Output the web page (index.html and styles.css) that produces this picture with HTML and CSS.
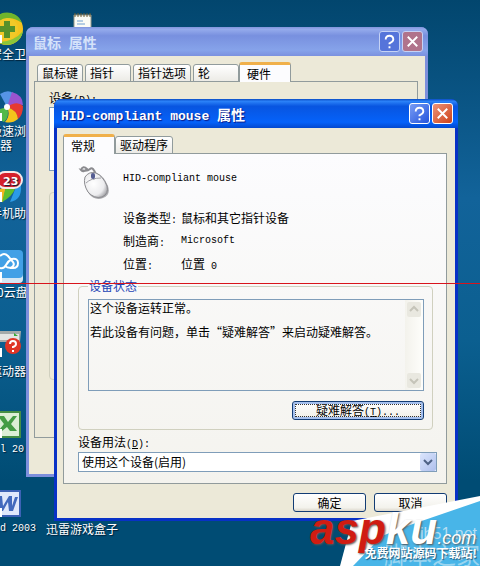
FILE: index.html
```
<!DOCTYPE html>
<html lang="zh-CN">
<head>
  <meta charset="UTF-8">
  <meta name="viewport" content="width=device-width, initial-scale=1.0">
  <title>HID-compliant mouse 属性</title>
  <link rel="stylesheet" href="styles.css">
</head>
<body>
  <div class="desktop">

    <!-- 桌面图标 -->
    <div class="shortcut safe">
      <svg width="24" height="34" viewBox="0 0 24 34">
        <circle cx="7" cy="17" r="16" fill="#f6c21d"/>
        <path d="M-9 17A16 16 0 0 1 22 11Q10 2 -2 10Z" fill="#6fb52c"/>
        <path d="M23 19A16 16 0 0 1-2 30Q14 30 23 19Z" fill="#8bc63a"/>
        <circle cx="7" cy="17" r="11" fill="#f2c928"/>
        <path d="M4 9h6v5h5v6h-5v6H4v-6h-5v-6h5z" fill="#57912a"/>
        <path d="M0 23h2v8h-2z" fill="#fff"/>
      </svg>
      <span>安全卫</span>
    </div>
    <div class="shortcut browser">
      <svg width="24" height="32" viewBox="0 0 24 32">
        <path d="M7 16L0 3Q8-2 13 2Q16 7 7 16Z" fill="#5594e6"/>
        <path d="M7 16L12 1Q23 4 23 14Q16 13 7 16Z" fill="#9a54cf"/>
        <path d="M7 16Q17 9 23 15Q23 24 18 28Q16 19 7 16Z" fill="#e73a32"/>
        <path d="M7 16Q17 19 18 28Q12 33 5 31Q11 24 7 16Z" fill="#f4c51b"/>
        <path d="M7 16Q10 26 4 31L0 29V18Z" fill="#54b948"/>
        <circle cx="7" cy="16" r="3" fill="#fff"/>
        <path d="M0 22h2v8h-2z" fill="#fff"/>
      </svg>
      <span>极速浏</span>
      <span class="second-line">器</span>
    </div>
    <div class="shortcut phone">
      <svg width="24" height="34" viewBox="0 0 24 34">
        <path d="M0 18L6 15L3 31H0Z" fill="#f2b51d"/>
        <path d="M6 15L16 16Q12 26 2 31Z" fill="#5fbf2d"/>
        <path d="M16 16L21 15Q22 29 10 31Z" fill="#2b9be8"/>
        <rect x="-3" y="1" width="25" height="16" rx="8" fill="#d5202c" stroke="#f6e9e9" stroke-width="2"/>
        <text x="3" y="14" class="badge-text">23</text>
        <path d="M0 21h2v10h-2z" fill="#fff"/>
      </svg>
      <span>手机助</span>
    </div>
    <div class="shortcut cloud">
      <svg width="24" height="34" viewBox="0 0 24 34">
        <rect x="-9" y="3" width="32" height="30" rx="4" fill="#d5e7f4"/>
        <rect x="-9" y="0" width="32" height="28" rx="4" fill="#42a0e6"/>
        <path d="M0 6Q4 2 8 6L13 12Q15 15 12 17T5 16M0 18Q4 19 6 15T12 9Q18 8 18 13T13 18H10" fill="none" stroke="#fff" stroke-width="2"/>
        <path d="M0 22h2v10h-2z" fill="#fff"/>
      </svg>
      <span>0云盘</span>
    </div>
    <div class="shortcut driver">
      <svg width="24" height="34" viewBox="0 0 24 34">
        <path d="M0 2H21L20 13H0Z" fill="#a4aaa9"/>
        <path d="M0 5H19V11H0Z" fill="#e3e5e3"/>
        <path d="M14 4l4 3h-4z" fill="#36a834"/>
        <circle cx="13" cy="17" r="8" fill="#df3526"/>
        <path d="M10 15Q10 12 13 12T16 15Q16 17 13 18V19M13 21V23" fill="none" stroke="#fff" stroke-width="2"/>
        <path d="M0 19h2v9h-2z" fill="#fff"/>
      </svg>
      <span>驱动器</span>
    </div>
    <div class="shortcut excel">
      <svg width="24" height="32" viewBox="0 0 24 32">
        <rect x="-4" y="3" width="24" height="25" fill="#dbeed6" stroke="#448e45" stroke-width="2"/>
        <path d="M-2 7H4L8 13L13 7H17L11 15L17 22H10L7 18L2 22H-2L4 15Z" fill="#449c45"/>
        <path d="M0 20h2v9h-2z" fill="#fff"/>
      </svg>
      <span class="latin">l 20</span>
    </div>
    <div class="shortcut word">
      <svg width="24" height="32" viewBox="0 0 24 32">
        <rect x="-4" y="3" width="24" height="25" fill="#e0e8fb" stroke="#3d62b5" stroke-width="2"/>
        <path d="M-2 8H2L3 18L9 8H12L12 18L15 9H18L13 23H9L8 14L3 23H-1Z" fill="#4269bd"/>
        <path d="M0 20h2v9h-2z" fill="#fff"/>
      </svg>
      <span class="latin">d 2003</span>
    </div>
    <div class="shortcut gamebox"><span>迅雷游戏盒子</span></div>
    <svg class="notepad" width="20" height="18" viewBox="0 0 20 18">
      <path d="M1 2H18V18H1Z" fill="#fbfbf5" stroke="#9a9a8a"/>
      <path d="M2 0v4M5 0v4M8 0v4M11 0v4M14 0v4M17 0v4" stroke="#6b5c34"/>
      <path d="M4 8H10M4 11H12" stroke="#6f9fd0"/>
    </svg>

    <!-- 鼠标 属性 -->
    <div class="window window-back">
      <div class="title-bar">
        <h2>鼠标<span class="latin"> </span>属性</h2>
        <button class="caption-btn" aria-label="帮助"><svg width="20" height="20" viewBox="0 0 20 20"><path d="M6 8Q6 4 10 4T14 8Q14 10 10 12V13M10 15V17" /></svg></button>
        <button class="caption-btn close" aria-label="关闭"><svg width="20" height="20" viewBox="0 0 20 20"><path d="M5 5L15 15M15 5L5 15"/></svg></button>
      </div>
      <div class="window-body">
        <div class="tabs">
          <button class="tab">鼠标键</button>
          <button class="tab">指针</button>
          <button class="tab tab-wide">指针选项</button>
          <button class="tab">轮</button>
          <button class="tab active">硬件</button>
        </div>
        <div class="panel">
          <p>设备<span class="latin">(<u>D</u>):</span></p>
          <div class="device-list"></div>
          <div class="device-props"></div>
        </div>
      </div>
    </div>

    <!-- HID-compliant mouse 属性 -->
    <div class="window window-front">
      <div class="title-bar">
        <h1><span class="latin">HID-compliant mouse </span>属性</h1>
        <button class="caption-btn" aria-label="帮助"><svg width="20" height="20" viewBox="0 0 20 20"><path d="M6 8Q6 4 10 4T14 8Q14 10 10 12V13M10 15V17" /></svg></button>
        <button class="caption-btn close" aria-label="关闭"><svg width="20" height="20" viewBox="0 0 20 20"><path d="M5 5L15 15M15 5L5 15"/></svg></button>
      </div>
      <div class="window-body">
        <div class="tabs">
          <button class="tab active">常规</button>
          <button class="tab">驱动程序</button>
        </div>
        <div class="panel">
          <div class="device-head">
            <svg width="32" height="36" viewBox="0 0 32 36">
              <defs>
                <radialGradient id="shell" cx="40%" cy="45%" r="65%">
                  <stop offset="0" stop-color="#fff"/>
                  <stop offset=".7" stop-color="#ececee"/>
                  <stop offset="1" stop-color="#a9a9ad"/>
                </radialGradient>
              </defs>
              <path d="M3 5Q5 0 9 4Q5 8 3 5Q9 7 12 4T18 10" fill="none" stroke="#8b8b8f" stroke-width="2"/>
              <path d="M8 12Q12 6 19 8Q26 11 30 21Q33 30 25 33Q17 36 11 29Q6 20 8 12Z" fill="#77777b" opacity=".6"/>
              <path d="M7 12Q11 6 18 8Q25 11 29 21Q31 29 24 32Q16 34 10 27Q5 19 7 12Z" fill="url(#shell)" stroke="#8b8b8f"/>
              <path d="M8 18Q13 13 23 13M14 8L16 15" fill="none" stroke="#a3a3a9"/>
              <rect x="13" y="8" width="4" height="6" rx="2" fill="#555d92"/>
            </svg>
            <strong class="latin">HID-compliant mouse</strong>
          </div>
          <dl class="device-info">
            <dt>设备类型<span class="latin">:</span></dt><dd>鼠标和其它指针设备</dd>
            <dt>制造商<span class="latin">:</span></dt><dd class="latin">Microsoft</dd>
            <dt>位置<span class="latin">:</span></dt><dd>位置<span class="latin"> 0</span></dd>
          </dl>
          <fieldset class="status">
            <legend><label for="status">设备状态</label></legend>
            <div class="status-box">
              <textarea id="status" readonly>这个设备运转正常。

若此设备有问题，单击“疑难解答”来启动疑难解答。</textarea>
              <div class="scrollbar">
                <button aria-label="向上" disabled><svg width="14" height="15" viewBox="0 0 14 15"><path d="M3 9L7 5L11 9"/></svg></button>
                <button aria-label="向下" disabled><svg width="14" height="15" viewBox="0 0 14 15"><path d="M3 6L7 10L11 6"/></svg></button>
              </div>
            </div>
            <button class="btn btn-focus">疑难解答<span class="latin">(<u>T</u>)...</span></button>
          </fieldset>
          <label class="usage-label" for="usage">设备用法<span class="latin">(<u>D</u>):</span></label>
          <div class="select-box">
            <select id="usage">
              <option>使用这个设备(启用)</option>
              <option>不要使用这个设备(停用)</option>
            </select>
            <svg class="select-arrow" width="16" height="18" viewBox="0 0 16 18"><path d="M4 7L8 11L12 7"/></svg>
          </div>
        </div>
        <div class="actions">
          <button class="btn">确定</button>
          <button class="btn">取消</button>
        </div>
      </div>
    </div>

    <div class="red-line"></div>

    <!-- 水印 -->
    <div class="watermark">
      <svg width="140" height="70" viewBox="0 0 140 70">
        <path d="M0 70L12 25L140 0V70Z" fill="#fff"/>
        <path d="M13 70L42 40L67 30L140 5V70Z" fill="#48b5e8"/>
      </svg>
      <span class="jb-url">jb51.net</span>
      <span class="jb-name">脚本之家</span>
      <span class="logo"><b>asp</b><i>ku</i><small>.com</small></span>
      <span class="slogan">免费网站源码下载站!</span>
    </div>
  </div>
</body>
</html>
```
FILE: styles.css
```
* { box-sizing: border-box; margin: 0; padding: 0; }
body {
  font-family: "Noto Sans CJK SC", sans-serif;
  font-size: 12px;
  line-height: 16px;
  color: #000;
}
button, select, textarea {
  font: inherit;
  color: inherit;
}
h1, h2 {
  font-size: 14px;
  flex: 1;
}
.latin {
  font-family: "Liberation Mono", monospace;
  font-size: 10px;
  font-weight: normal;
  line-height: 10px;
}
.desktop {
  position: relative;
  min-height: 100vh;
  overflow: hidden;
  background: linear-gradient(#02466e, #12639a 35%, #0b5f90 60%, #004c74 85%);
}

/* 桌面图标 */
.shortcut {
  position: absolute;
  left: 0;
  color: #fff;
  white-space: nowrap;
  text-shadow: 1px 1px 1px #002038;
}
.shortcut svg { display: block; }
.shortcut span { display: block; margin-left: -10px; }
.shortcut .latin { margin-left: 0; line-height: 18px; }
.shortcut .second-line { margin: -2px 0 0; }
.safe { top: 12px; }
.browser { top: 91px; }
.phone { top: 171px; }
.cloud { top: 250px; }
.driver { top: 329px; }
.excel { top: 409px; }
.word { top: 488px; }
.cloud span { margin-left: -3px; }
.gamebox { top: 521px; left: 46px; }
.gamebox span { margin: 0; }
.badge-text {
  font: bold 11px "DejaVu Sans", sans-serif;
  fill: #fff;
}
.notepad { position: absolute; left: 73px; top: 13px; }

/* 窗口 */
.window {
  position: absolute;
  padding: 0 3px 3px;
  border-radius: 7px 7px 0 0;
}
.window-back {
  left: 26px;
  right: 52px;
  top: 27px;
  background: #7d8fdc;
}
.window-front {
  left: 54px;
  right: 22px;
  top: 99px;
  background: #0831c6;
}
.title-bar {
  display: flex;
  align-items: center;
  gap: 2px;
  height: 29px;
  margin: 0 -3px;
  padding: 0 5px 0 7px;
  border-radius: 7px 7px 0 0;
  color: #fff;
}
.title-bar .latin {
  font-size: 13px;
  font-weight: bold;
}
.window-back .title-bar {
  background: linear-gradient(#8094dd, #95abec 8%, #7890df 30%, #86a3ea 80%, #7b91df);
}
.window-back h2 { color: #d5e2fa; }
.window-front .title-bar {
  background: linear-gradient(#0a4cc4, #2b82f8 8%, #0855e0 25%, #0562fa 80%, #0348ce);
}
.window-front h1 { text-shadow: 1px 1px 1px #0a1883; }
.caption-btn {
  width: 21px;
  height: 21px;
  border: 1px solid #fff;
  border-radius: 3px;
  background: linear-gradient(135deg, #789cf4, #2454dc);
}
.caption-btn.close { background: linear-gradient(135deg, #ed9379, #ce4219); }
.caption-btn svg {
  display: block;
  width: 19px;
  height: 19px;
  fill: none;
  stroke: #fff;
  stroke-width: 2;
}
.window-back .caption-btn {
  border-color: #c5d2f5;
  background: #5574da;
}
.window-back .caption-btn.close { background: #b0738b; }
.window-body {
  background: #ece9d8;
  padding: 6px 8px 6px 6px;
}

/* 选项卡 */
.tabs {
  display: flex;
  align-items: flex-end;
  position: relative;
  margin-bottom: -1px;
}
.tab {
  height: 18px;
  padding: 0 4px;
  border: 1px solid #919b9c;
  border-radius: 3px 3px 0 0;
  background: linear-gradient(#fff, #ecebe6);
  line-height: 16px;
  text-align: left;
}
.tab.active {
  width: 52px;
  height: 20px;
  padding: 0 7px;
  border-top: 3px solid #f0b04a;
  border-bottom: 0;
  background: #fcfcfe;
  line-height: 12px;
}
.panel { border: 1px solid #919b9c; }
.window-back .window-body { padding: 6px 7px 36px 5px; }
.window-back .tabs { gap: 2px; padding-left: 3px; }
.window-back .tab { min-width: 46px; }
.window-back .tab-wide { min-width: 58px; }
.window-back .tab.active { margin-left: -2px; }
.window-back .panel {
  padding: 8px 14px 57px;
}
.device-list {
  height: 64px;
  margin-top: 1px;
  border: 1px solid #7f9db9;
  background: #fff;
}
.device-props {
  height: 188px;
  margin-top: 21px;
  border: 1px solid #d0d0bf;
  border-radius: 4px;
}
.window-front .panel {
  padding: 11px 9px 11px 14px;
  background: linear-gradient(#fcfcfe, #f4f3ee);
}

/* 常规 */
.device-head {
  display: flex;
  align-items: flex-start;
  gap: 13px;
  height: 45px;
}
.device-head strong { margin-top: 9px; }
.device-info {
  display: grid;
  grid-template-columns: 58px 1fr;
  align-items: center;
  row-gap: 7px;
  margin-left: 45px;
}
.status {
  margin: 6px 4px 0 0;
  padding: 5px 8px 9px 9px;
  border: 1px solid #d0d0bf;
  border-radius: 4px;
}
.status legend {
  padding: 0 1px;
  height: 16px;
  color: #2445b5;
}
.status-box {
  display: flex;
  height: 92px;
  margin-bottom: 10px;
  border: 1px solid #7f9db9;
}
.status-box textarea {
  flex: 1;
  min-width: 0;
  padding: 2px 1px;
  border: 0;
  outline: 0;
  resize: none;
  overflow: hidden;
  background: transparent;
  line-height: 12px;
}
.scrollbar {
  display: flex;
  flex-direction: column;
  justify-content: space-between;
  padding: 2px;
  background: linear-gradient(90deg, #f3f2ec, #fefefb);
}
.scrollbar button {
  width: 14px;
  height: 15px;
  border: 0;
  border-radius: 2px;
  background: #e9e8e0;
}
.scrollbar svg {
  display: block;
  fill: none;
  stroke: #c5c4b9;
  stroke-width: 2;
}
.btn {
  width: 73px;
  height: 19px;
  border: 1px solid #123c74;
  border-radius: 3px;
  background: linear-gradient(#fff, #f3f2ec 80%, #dcd7cb);
  line-height: 16px;
}
.btn-focus {
  display: block;
  width: 132px;
  margin-left: auto;
  line-height: 14px;
  box-shadow: inset 0 0 0 2px #a5c0ee;
  outline: 1px dotted #333;
  outline-offset: -4px;
}
.usage-label {
  display: block;
  margin: 4px 0 2px;
}
.select-box { position: relative; }
.select-box select {
  display: block;
  width: 100%;
  height: 20px;
  padding: 0 20px 0 3px;
  border: 1px solid #7f9db9;
  background: #fff;
  appearance: none;
  line-height: 16px;
}
.select-arrow {
  position: absolute;
  top: 1px;
  right: 1px;
  border-radius: 2px;
  background: linear-gradient(135deg, #dce6fd, #aebfec);
  fill: none;
  stroke: #4d6185;
  stroke-width: 2;
  pointer-events: none;
}
.actions {
  display: flex;
  justify-content: flex-end;
  gap: 8px;
  margin-top: 9px;
}
.red-line {
  position: absolute;
  top: 283px;
  left: 0;
  right: 0;
  height: 1px;
  background: #d8141c;
}

/* 水印 */
.watermark {
  position: absolute;
  right: 0;
  bottom: 0;
  width: 170px;
  height: 70px;
  color: #fff;
  white-space: nowrap;
}
.watermark svg, .watermark span {
  position: absolute;
}
.watermark svg { right: 0; bottom: 0; }
.jb-url {
  right: 3px;
  top: 29px;
  font: 16px "Liberation Sans", sans-serif;
  color: #b5def2;
}
.jb-name {
  right: 0;
  bottom: 0;
  font-size: 24px;
  line-height: 24px;
  color: #9bd5f0;
}
.logo {
  left: 0;
  top: 11px;
  font: italic bold 44px/44px "Liberation Sans", sans-serif;
  text-shadow: 1px 1px 2px #555;
}
.logo b { color: #d01c12; }
.logo small {
  font-size: 18px;
  font-weight: normal;
}
.slogan {
  right: 3px;
  bottom: 5px;
  font-weight: bold;
  text-shadow: 1px 1px 1px #1d5577;
}
```
